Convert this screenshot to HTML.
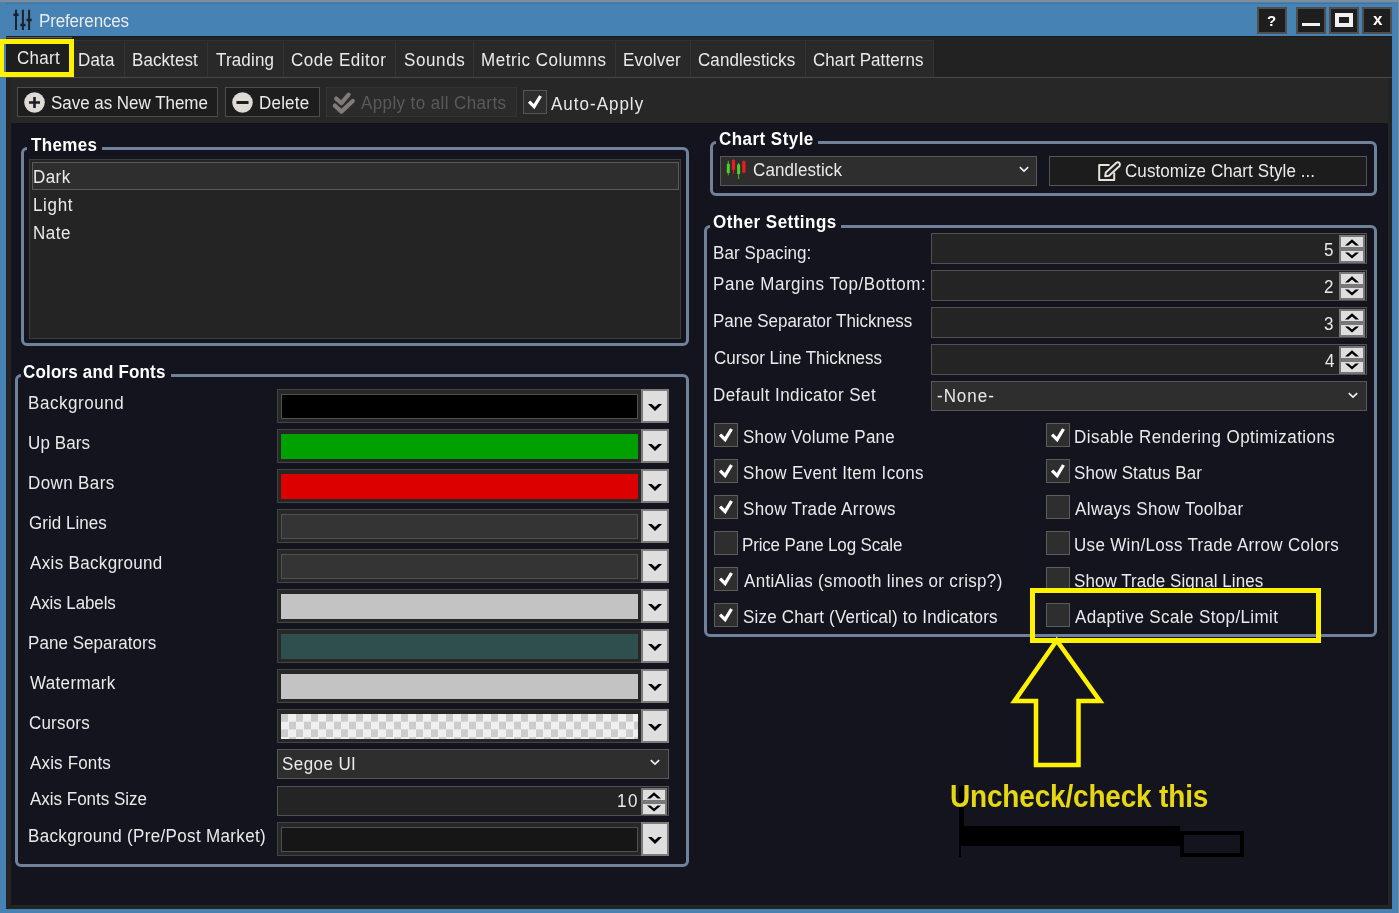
<!DOCTYPE html>
<html lang="en"><head><meta charset="utf-8"><title>Preferences</title>
<style>
html,body{margin:0;padding:0}
body{width:1399px;height:913px;overflow:hidden;background:#4682b4;position:relative;font-family:"Liberation Sans", sans-serif;color:#eaeaea}
div,span,svg{position:absolute;box-sizing:border-box}
.t{white-space:nowrap;line-height:1;transform:scaleY(1.09);will-change:transform}
</style></head><body>
<div style="left:0px;top:0px;width:1399px;height:2px;background:#7f8c9b"></div>
<div style="left:6px;top:3px;width:1386px;height:1px;background:#3f75a3"></div>
<div style="left:1398px;top:2px;width:1px;height:911px;background:#7f8c9b"></div>
<div style="left:6px;top:37px;width:1386px;height:871.6px;background:#242424"></div>
<div style="left:6px;top:36px;width:1386px;height:1.2999999999999972px;background:#1c1c1c"></div>
<div style="left:6px;top:37.3px;width:1386px;height:39.7px;background:#222"></div>
<div style="left:6px;top:36.5px;width:66px;height:1.5px;background:#5c5c5c"></div>
<div style="left:72px;top:40px;width:861.5px;height:37px;background:#292929;border:1px solid #313131;border-bottom:0"></div>
<div style="left:6px;top:76.8px;width:1386px;height:1.6000000000000085px;background:#484848"></div>
<div style="left:11px;top:78px;width:1377px;height:45px;background:#272727"></div>
<div style="left:11px;top:123px;width:1377px;height:782px;background:#14141f"></div>
<svg style="left:10px;top:6px" width="28" height="28" viewBox="0 0 28 28"><g stroke="#1d2229" stroke-width="2" fill="none" stroke-linecap="butt"><path d="M6 3.7V24M12.9 3.7V24M19.1 3.7V24"/><path stroke-width="2.6" d="M3.4 8.7h5.2M10.3 19h5.2M16.5 14h5.2"/></g></svg>
<div style="left:1257px;top:7px;width:30px;height:27px;background:#1e1e1e;border:2px solid #4f4f4f"></div>
<div style="left:1296px;top:7px;width:30px;height:27px;background:#1e1e1e;border:2px solid #4f4f4f"></div>
<div style="left:1329px;top:7px;width:30px;height:27px;background:#1e1e1e;border:2px solid #4f4f4f"></div>
<div style="left:1362px;top:7px;width:30px;height:27px;background:#1e1e1e;border:2px solid #4f4f4f"></div>
<span class="t" style="left:1267px;top:13px;font-size:15px;font-weight:700;color:#fff;transform:none">?</span>
<div style="left:1302px;top:22.5px;width:18px;height:3.5px;background:#f2f2f2"></div>
<div style="left:1335px;top:12.6px;width:18.40000000000009px;height:14.799999999999999px;border:4.5px solid #f0f0f0"></div>
<span class="t" style="left:1372.5px;top:11px;font-size:17px;font-weight:700;color:#fff;transform:none">x</span>
<div style="left:6px;top:44px;width:63px;height:28px;background:#1e1e1e"></div>
<div style="left:124px;top:41px;width:1px;height:36px;background:#343434"></div>
<div style="left:206.5px;top:41px;width:1.0px;height:36px;background:#343434"></div>
<div style="left:282.5px;top:41px;width:1.0px;height:36px;background:#343434"></div>
<div style="left:395px;top:41px;width:1px;height:36px;background:#343434"></div>
<div style="left:473px;top:41px;width:1px;height:36px;background:#343434"></div>
<div style="left:614.5px;top:41px;width:1.0px;height:36px;background:#343434"></div>
<div style="left:690px;top:41px;width:1px;height:36px;background:#343434"></div>
<div style="left:805px;top:41px;width:1px;height:36px;background:#343434"></div>
<div style="left:0px;top:39px;width:74px;height:38px;border:5px solid #fff200;border-left-width:4px"></div>
<div style="left:17px;top:87px;width:201px;height:30px;background:#1d1d1d;border:1px solid #4d4d4d"></div>
<div style="left:225px;top:87px;width:95px;height:30px;background:#1d1d1d;border:1px solid #4d4d4d"></div>
<div style="left:326px;top:87px;width:191px;height:30px;background:#2b2b2b;border:1px solid #343434"></div>
<div style="left:523px;top:90px;width:24px;height:24px;background:#2e2e2e;border:1px solid #555"></div>
<svg style="left:24.1px;top:92.3px" width="21" height="21" viewBox="0 0 21 21"><circle cx="10.5" cy="10.5" r="10.3" fill="#dedad6"/><path d="M5 10.5h11M10.5 5v11" stroke="#1d1d1d" stroke-width="2.6"/></svg>
<svg style="left:232.1px;top:92.3px" width="21" height="21" viewBox="0 0 21 21"><circle cx="10.5" cy="10.5" r="10.3" fill="#dedad6"/><path d="M4.5 10.5h12" stroke="#1d1d1d" stroke-width="3"/></svg>
<svg style="left:330px;top:90px" width="28" height="26" viewBox="330 90 28 26"><g fill="none" stroke="#7e7b78" stroke-width="4.2" stroke-linecap="round" stroke-linejoin="round"><path d="M336.2 98.6l5.2 4.6 7.2-8.6"/><path d="M334.8 105.6l6.6 6 11.4-10.6"/></g></svg>
<svg style="left:523px;top:90px" width="24" height="24" viewBox="0 0 24 24"><path d="M6.1 11.6L11.1 16.6 17.5 6" fill="none" stroke="#fff" stroke-width="3.3"/></svg>
<div style="left:21px;top:147px;width:668px;height:199px;border:3px solid #70829a;border-radius:6px"></div>
<div style="left:27px;top:146px;width:75px;height:5px;background:#14141f"></div>
<div style="left:15px;top:374.3px;width:674px;height:492.7px;border:3px solid #70829a;border-radius:6px"></div>
<div style="left:21px;top:373.3px;width:150px;height:5.0px;background:#14141f"></div>
<div style="left:710px;top:141.3px;width:667px;height:54.5px;border:3px solid #70829a;border-radius:6px"></div>
<div style="left:716px;top:140.3px;width:102px;height:5.0px;background:#14141f"></div>
<div style="left:704px;top:224.5px;width:673px;height:412.79999999999995px;border:3px solid #70829a;border-radius:6px"></div>
<div style="left:710px;top:223.5px;width:131px;height:5.0px;background:#14141f"></div>
<div style="left:29px;top:159.3px;width:652px;height:179.7px;background:#242424;border:1px solid #3c3c3c"></div>
<div style="left:32px;top:162px;width:646.5px;height:28px;background:#2e2e2e;border:1px solid #5a5a5a"></div>
<div style="left:277px;top:389px;width:392px;height:34px;background:#272727;border:1px solid #444"></div>
<div style="left:281px;top:393.5px;width:357px;height:25.0px;border:1px solid #505050;background:#000000"></div>
<div style="left:641px;top:389px;width:28px;height:34px;background:#dedede;border:2px solid #7c7c7c"></div>
<svg style="left:647px;top:402.5px" width="16" height="9" viewBox="0 0 16 9"><path d="M1 1h3.6L8 4 11.4 1H15L8 8z" fill="#000"/></svg>
<div style="left:277px;top:429px;width:392px;height:34px;background:#272727;border:1px solid #444"></div>
<div style="left:281px;top:433.5px;width:357px;height:25.0px;background:#00a000"></div>
<div style="left:641px;top:429px;width:28px;height:34px;background:#dedede;border:2px solid #7c7c7c"></div>
<svg style="left:647px;top:442.5px" width="16" height="9" viewBox="0 0 16 9"><path d="M1 1h3.6L8 4 11.4 1H15L8 8z" fill="#000"/></svg>
<div style="left:277px;top:469px;width:392px;height:34px;background:#272727;border:1px solid #444"></div>
<div style="left:281px;top:473.5px;width:357px;height:25.0px;background:#dc0000"></div>
<div style="left:641px;top:469px;width:28px;height:34px;background:#dedede;border:2px solid #7c7c7c"></div>
<svg style="left:647px;top:482.5px" width="16" height="9" viewBox="0 0 16 9"><path d="M1 1h3.6L8 4 11.4 1H15L8 8z" fill="#000"/></svg>
<div style="left:277px;top:509px;width:392px;height:34px;background:#272727;border:1px solid #444"></div>
<div style="left:281px;top:513.5px;width:357px;height:25.0px;border:1px solid #505050;background:#343434"></div>
<div style="left:641px;top:509px;width:28px;height:34px;background:#dedede;border:2px solid #7c7c7c"></div>
<svg style="left:647px;top:522.5px" width="16" height="9" viewBox="0 0 16 9"><path d="M1 1h3.6L8 4 11.4 1H15L8 8z" fill="#000"/></svg>
<div style="left:277px;top:549px;width:392px;height:34px;background:#272727;border:1px solid #444"></div>
<div style="left:281px;top:553.5px;width:357px;height:25.0px;border:1px solid #505050;background:#343434"></div>
<div style="left:641px;top:549px;width:28px;height:34px;background:#dedede;border:2px solid #7c7c7c"></div>
<svg style="left:647px;top:562.5px" width="16" height="9" viewBox="0 0 16 9"><path d="M1 1h3.6L8 4 11.4 1H15L8 8z" fill="#000"/></svg>
<div style="left:277px;top:589px;width:392px;height:34px;background:#272727;border:1px solid #444"></div>
<div style="left:281px;top:593.5px;width:357px;height:25.0px;background:#c3c3c3"></div>
<div style="left:641px;top:589px;width:28px;height:34px;background:#dedede;border:2px solid #7c7c7c"></div>
<svg style="left:647px;top:602.5px" width="16" height="9" viewBox="0 0 16 9"><path d="M1 1h3.6L8 4 11.4 1H15L8 8z" fill="#000"/></svg>
<div style="left:277px;top:629px;width:392px;height:34px;background:#272727;border:1px solid #444"></div>
<div style="left:281px;top:633.5px;width:357px;height:25.0px;background:#2f4f4f"></div>
<div style="left:641px;top:629px;width:28px;height:34px;background:#dedede;border:2px solid #7c7c7c"></div>
<svg style="left:647px;top:642.5px" width="16" height="9" viewBox="0 0 16 9"><path d="M1 1h3.6L8 4 11.4 1H15L8 8z" fill="#000"/></svg>
<div style="left:277px;top:669px;width:392px;height:34px;background:#272727;border:1px solid #444"></div>
<div style="left:281px;top:673.5px;width:357px;height:25.0px;background:#c3c3c3"></div>
<div style="left:641px;top:669px;width:28px;height:34px;background:#dedede;border:2px solid #7c7c7c"></div>
<svg style="left:647px;top:682.5px" width="16" height="9" viewBox="0 0 16 9"><path d="M1 1h3.6L8 4 11.4 1H15L8 8z" fill="#000"/></svg>
<div style="left:277px;top:709px;width:392px;height:34px;background:#272727;border:1px solid #444"></div>
<div style="left:281px;top:713.5px;width:357px;height:25.0px;background:conic-gradient(#f0f0f0 25%,#ccc 0 50%,#f0f0f0 0 75%,#ccc 0) 0 0/15px 15.4px"></div>
<div style="left:641px;top:709px;width:28px;height:34px;background:#dedede;border:2px solid #7c7c7c"></div>
<svg style="left:647px;top:722.5px" width="16" height="9" viewBox="0 0 16 9"><path d="M1 1h3.6L8 4 11.4 1H15L8 8z" fill="#000"/></svg>
<div style="left:277px;top:822px;width:392px;height:34px;background:#272727;border:1px solid #444"></div>
<div style="left:281px;top:826.5px;width:357px;height:25.0px;border:1px solid #505050;background:#161616"></div>
<div style="left:641px;top:822px;width:28px;height:34px;background:#dedede;border:2px solid #7c7c7c"></div>
<svg style="left:647px;top:835.5px" width="16" height="9" viewBox="0 0 16 9"><path d="M1 1h3.6L8 4 11.4 1H15L8 8z" fill="#000"/></svg>
<div style="left:277px;top:749.3px;width:392px;height:29.300000000000068px;background:#2e2e2e;border:1px solid #585858"></div>
<svg style="left:650px;top:759.3px" width="10" height="7" viewBox="0 0 10 7"><path d="M0.8 1.2l4.2 4 4.2-4" fill="none" stroke="#f0f0f0" stroke-width="1.6"/></svg>
<div style="left:277px;top:786px;width:392px;height:30px;background:#242424;border:1px solid #505050"></div>
<div style="left:640.8px;top:788px;width:26.5px;height:27px;background:#787878"></div>
<div style="left:642.8px;top:790px;width:22.5px;height:10px;background:#dedede"></div>
<div style="left:642.8px;top:803.6px;width:22.5px;height:10.399999999999977px;background:#dedede"></div>
<svg style="left:646.8px;top:791.6px" width="14" height="7" viewBox="0 0 14 7"><path d="M0 6.4h3.4L7 3.4 10.6 6.4H14L7 0.2z" fill="#000"/></svg>
<svg style="left:646.8px;top:804.8px" width="14" height="7" viewBox="0 0 14 7"><path d="M0 0.4h3.4L7 3.4 10.6 0.4H14L7 6.6z" fill="#000"/></svg>
<div style="left:931px;top:233px;width:436px;height:31px;background:#242424;border:1px solid #505050"></div>
<div style="left:1338.8px;top:235px;width:26.5px;height:28px;background:#787878"></div>
<div style="left:1340.8px;top:237px;width:22.5px;height:10px;background:#dedede"></div>
<div style="left:1340.8px;top:250.6px;width:22.5px;height:10.400000000000006px;background:#dedede"></div>
<svg style="left:1344.8px;top:238.6px" width="14" height="7" viewBox="0 0 14 7"><path d="M0 6.4h3.4L7 3.4 10.6 6.4H14L7 0.2z" fill="#000"/></svg>
<svg style="left:1344.8px;top:251.8px" width="14" height="7" viewBox="0 0 14 7"><path d="M0 0.4h3.4L7 3.4 10.6 0.4H14L7 6.6z" fill="#000"/></svg>
<div style="left:931px;top:270px;width:436px;height:31px;background:#242424;border:1px solid #505050"></div>
<div style="left:1338.8px;top:272px;width:26.5px;height:28px;background:#787878"></div>
<div style="left:1340.8px;top:274px;width:22.5px;height:10px;background:#dedede"></div>
<div style="left:1340.8px;top:287.6px;width:22.5px;height:10.399999999999977px;background:#dedede"></div>
<svg style="left:1344.8px;top:275.6px" width="14" height="7" viewBox="0 0 14 7"><path d="M0 6.4h3.4L7 3.4 10.6 6.4H14L7 0.2z" fill="#000"/></svg>
<svg style="left:1344.8px;top:288.8px" width="14" height="7" viewBox="0 0 14 7"><path d="M0 0.4h3.4L7 3.4 10.6 0.4H14L7 6.6z" fill="#000"/></svg>
<div style="left:931px;top:307px;width:436px;height:31px;background:#242424;border:1px solid #505050"></div>
<div style="left:1338.8px;top:309px;width:26.5px;height:28px;background:#787878"></div>
<div style="left:1340.8px;top:311px;width:22.5px;height:10px;background:#dedede"></div>
<div style="left:1340.8px;top:324.6px;width:22.5px;height:10.399999999999977px;background:#dedede"></div>
<svg style="left:1344.8px;top:312.6px" width="14" height="7" viewBox="0 0 14 7"><path d="M0 6.4h3.4L7 3.4 10.6 6.4H14L7 0.2z" fill="#000"/></svg>
<svg style="left:1344.8px;top:325.8px" width="14" height="7" viewBox="0 0 14 7"><path d="M0 0.4h3.4L7 3.4 10.6 0.4H14L7 6.6z" fill="#000"/></svg>
<div style="left:931px;top:344px;width:436px;height:31px;background:#242424;border:1px solid #505050"></div>
<div style="left:1338.8px;top:346px;width:26.5px;height:28px;background:#787878"></div>
<div style="left:1340.8px;top:348px;width:22.5px;height:10px;background:#dedede"></div>
<div style="left:1340.8px;top:361.6px;width:22.5px;height:10.399999999999977px;background:#dedede"></div>
<svg style="left:1344.8px;top:349.6px" width="14" height="7" viewBox="0 0 14 7"><path d="M0 6.4h3.4L7 3.4 10.6 6.4H14L7 0.2z" fill="#000"/></svg>
<svg style="left:1344.8px;top:362.8px" width="14" height="7" viewBox="0 0 14 7"><path d="M0 0.4h3.4L7 3.4 10.6 0.4H14L7 6.6z" fill="#000"/></svg>
<div style="left:720px;top:156px;width:317px;height:30px;background:#2e2e2e;border:1px solid #585858"></div>
<svg style="left:1018.7px;top:166.3px" width="10" height="7" viewBox="0 0 10 7"><path d="M0.8 1.2l4.2 4 4.2-4" fill="none" stroke="#f0f0f0" stroke-width="1.6"/></svg>
<svg style="left:725px;top:157px" width="23" height="24" viewBox="725 157 23 24"><g fill="none"><path stroke="#2db52d" stroke-width="1.1" d="M728.3 160.8V175.2M738.6 162.9V179"/><path stroke="#e8151b" stroke-width="1.1" d="M733.5 158.9V173.7M743.9 160.5V173.6"/><path stroke="#4fcf2f" stroke-width="3" d="M728.3 163.8V173M738.6 164.4V174.1"/><path stroke="#f01a20" stroke-width="3.2" d="M733.5 159.9V169.8M743.9 161.2V172.6"/></g></svg>
<div style="left:1049px;top:156px;width:318px;height:30px;background:#1c1c1c;border:1px solid #555"></div>
<svg style="left:1096px;top:160px" width="26" height="24" viewBox="1096 160 26 24"><g fill="none" stroke="#e6e2dd" stroke-width="2" stroke-linejoin="round"><path d="M1109.5 165H1099.2v15h15v-7.5"/><path d="M1105.2 176.2l0.6-3.6 10.6-9.9a2.3 2.3 0 0 1 3.2 3.2l-10.6 9.9z"/></g></svg>
<div style="left:931px;top:381.3px;width:436px;height:29.69999999999999px;background:#2e2e2e;border:1px solid #585858"></div>
<svg style="left:1348px;top:391.5px" width="10" height="7" viewBox="0 0 10 7"><path d="M0.8 1.2l4.2 4 4.2-4" fill="none" stroke="#f0f0f0" stroke-width="1.6"/></svg>
<div style="left:714px;top:423px;width:24px;height:24px;background:#2e2e2e;border:1px solid #5c5c5c"></div>
<svg style="left:714px;top:423px" width="24" height="24" viewBox="0 0 24 24"><path d="M6.1 11.6L11.1 16.6 17.5 6" fill="none" stroke="#fff" stroke-width="3.3"/></svg>
<div style="left:714px;top:459px;width:24px;height:24px;background:#2e2e2e;border:1px solid #5c5c5c"></div>
<svg style="left:714px;top:459px" width="24" height="24" viewBox="0 0 24 24"><path d="M6.1 11.6L11.1 16.6 17.5 6" fill="none" stroke="#fff" stroke-width="3.3"/></svg>
<div style="left:714px;top:495px;width:24px;height:24px;background:#2e2e2e;border:1px solid #5c5c5c"></div>
<svg style="left:714px;top:495px" width="24" height="24" viewBox="0 0 24 24"><path d="M6.1 11.6L11.1 16.6 17.5 6" fill="none" stroke="#fff" stroke-width="3.3"/></svg>
<div style="left:714px;top:531px;width:24px;height:24px;background:#2e2e2e;border:1px solid #5c5c5c"></div>
<div style="left:714px;top:567px;width:24px;height:24px;background:#2e2e2e;border:1px solid #5c5c5c"></div>
<svg style="left:714px;top:567px" width="24" height="24" viewBox="0 0 24 24"><path d="M6.1 11.6L11.1 16.6 17.5 6" fill="none" stroke="#fff" stroke-width="3.3"/></svg>
<div style="left:714px;top:603px;width:24px;height:24px;background:#2e2e2e;border:1px solid #5c5c5c"></div>
<svg style="left:714px;top:603px" width="24" height="24" viewBox="0 0 24 24"><path d="M6.1 11.6L11.1 16.6 17.5 6" fill="none" stroke="#fff" stroke-width="3.3"/></svg>
<div style="left:1046px;top:423px;width:24px;height:24px;background:#2e2e2e;border:1px solid #5c5c5c"></div>
<svg style="left:1046px;top:423px" width="24" height="24" viewBox="0 0 24 24"><path d="M6.1 11.6L11.1 16.6 17.5 6" fill="none" stroke="#fff" stroke-width="3.3"/></svg>
<div style="left:1046px;top:459px;width:24px;height:24px;background:#2e2e2e;border:1px solid #5c5c5c"></div>
<svg style="left:1046px;top:459px" width="24" height="24" viewBox="0 0 24 24"><path d="M6.1 11.6L11.1 16.6 17.5 6" fill="none" stroke="#fff" stroke-width="3.3"/></svg>
<div style="left:1046px;top:495px;width:24px;height:24px;background:#2e2e2e;border:1px solid #5c5c5c"></div>
<div style="left:1046px;top:531px;width:24px;height:24px;background:#2e2e2e;border:1px solid #5c5c5c"></div>
<div style="left:1046px;top:567px;width:24px;height:24px;background:#2e2e2e;border:1px solid #5c5c5c"></div>
<div style="left:1046px;top:603px;width:24px;height:24px;background:#2e2e2e;border:1px solid #5c5c5c"></div>
<div style="left:959px;top:786px;width:5px;height:42px;background:#000"></div>
<div style="left:959px;top:826px;width:2px;height:31px;background:#000"></div>
<div style="left:959px;top:826px;width:221px;height:19.700000000000045px;background:#000"></div>
<div style="left:1179.5px;top:830.7px;width:64.5px;height:26.299999999999955px;border:4.5px solid #000"></div>
<span class="t" id="t0" style="left:38.71px;top:12.61px;font-size:17px;font-weight:400;color:#eaeaea;letter-spacing:-0.156px;transform-origin:0 14.39px">Preferences</span>
<span class="t" id="t1" style="left:17.44px;top:49.61px;font-size:17px;font-weight:400;color:#eaeaea;letter-spacing:0.277px;transform-origin:0 14.39px">Chart</span>
<span class="t" id="t2" style="left:78.11px;top:51.61px;font-size:17px;font-weight:400;color:#eaeaea;letter-spacing:0.158px;transform-origin:0 14.39px">Data</span>
<span class="t" id="t3" style="left:132.41px;top:51.61px;font-size:17px;font-weight:400;color:#eaeaea;letter-spacing:0.074px;transform-origin:0 14.39px">Backtest</span>
<span class="t" id="t4" style="left:216.12px;top:51.61px;font-size:17px;font-weight:400;color:#eaeaea;letter-spacing:0.160px;transform-origin:0 14.39px">Trading</span>
<span class="t" id="t5" style="left:291.14px;top:51.61px;font-size:17px;font-weight:400;color:#eaeaea;letter-spacing:0.516px;transform-origin:0 14.39px">Code Editor</span>
<span class="t" id="t6" style="left:403.53px;top:51.61px;font-size:17px;font-weight:400;color:#eaeaea;letter-spacing:0.623px;transform-origin:0 14.39px">Sounds</span>
<span class="t" id="t7" style="left:481.11px;top:51.61px;font-size:17px;font-weight:400;color:#eaeaea;letter-spacing:0.532px;transform-origin:0 14.39px">Metric Columns</span>
<span class="t" id="t8" style="left:623.11px;top:51.61px;font-size:17px;font-weight:400;color:#eaeaea;letter-spacing:0.165px;transform-origin:0 14.39px">Evolver</span>
<span class="t" id="t9" style="left:698.44px;top:51.61px;font-size:17px;font-weight:400;color:#eaeaea;letter-spacing:0.073px;transform-origin:0 14.39px">Candlesticks</span>
<span class="t" id="t10" style="left:813.44px;top:51.61px;font-size:17px;font-weight:400;color:#eaeaea;letter-spacing:0.067px;transform-origin:0 14.39px">Chart Patterns</span>
<span class="t" id="t11" style="left:51.13px;top:94.61px;font-size:17px;font-weight:400;color:#eaeaea;letter-spacing:-0.035px;transform-origin:0 14.39px">Save as New Theme</span>
<span class="t" id="t12" style="left:259.01px;top:94.61px;font-size:17px;font-weight:400;color:#eaeaea;letter-spacing:0.202px;transform-origin:0 14.39px">Delete</span>
<span class="t" id="t13" style="left:360.67px;top:94.61px;font-size:17px;font-weight:400;color:#5a5a5a;letter-spacing:0.394px;transform-origin:0 14.39px">Apply to all Charts</span>
<span class="t" id="t14" style="left:551.37px;top:95.61px;font-size:17px;font-weight:400;color:#eaeaea;letter-spacing:0.999px;transform-origin:0 14.39px">Auto-Apply</span>
<span class="t" id="t15" style="left:30.81px;top:136.61px;font-size:17px;font-weight:700;color:#ffffff;letter-spacing:0.328px;transform-origin:0 14.39px">Themes</span>
<span class="t" id="t16" style="left:23.30px;top:363.61px;font-size:17px;font-weight:700;color:#ffffff;letter-spacing:0.174px;transform-origin:0 14.39px">Colors and Fonts</span>
<span class="t" id="t17" style="left:718.80px;top:130.61px;font-size:17px;font-weight:700;color:#ffffff;letter-spacing:0.453px;transform-origin:0 14.39px">Chart Style</span>
<span class="t" id="t18" style="left:713.00px;top:213.61px;font-size:17px;font-weight:700;color:#ffffff;letter-spacing:0.467px;transform-origin:0 14.39px">Other Settings</span>
<span class="t" id="t19" style="left:33.01px;top:168.61px;font-size:17px;font-weight:400;color:#eaeaea;letter-spacing:0.421px;transform-origin:0 14.39px">Dark</span>
<span class="t" id="t20" style="left:32.71px;top:196.61px;font-size:17px;font-weight:400;color:#eaeaea;letter-spacing:0.661px;transform-origin:0 14.39px">Light</span>
<span class="t" id="t21" style="left:32.71px;top:224.61px;font-size:17px;font-weight:400;color:#eaeaea;letter-spacing:0.509px;transform-origin:0 14.39px">Nate</span>
<span class="t" id="t22" style="left:28.41px;top:394.61px;font-size:17px;font-weight:400;color:#eaeaea;letter-spacing:0.551px;transform-origin:0 14.39px">Background</span>
<span class="t" id="t23" style="left:28.49px;top:434.61px;font-size:17px;font-weight:400;color:#eaeaea;letter-spacing:0.117px;transform-origin:0 14.39px">Up Bars</span>
<span class="t" id="t24" style="left:28.41px;top:474.61px;font-size:17px;font-weight:400;color:#eaeaea;letter-spacing:0.384px;transform-origin:0 14.39px">Down Bars</span>
<span class="t" id="t25" style="left:28.95px;top:514.61px;font-size:17px;font-weight:400;color:#eaeaea;letter-spacing:0.021px;transform-origin:0 14.39px">Grid Lines</span>
<span class="t" id="t26" style="left:29.77px;top:554.61px;font-size:17px;font-weight:400;color:#eaeaea;letter-spacing:0.339px;transform-origin:0 14.39px">Axis Background</span>
<span class="t" id="t27" style="left:29.77px;top:594.61px;font-size:17px;font-weight:400;color:#eaeaea;letter-spacing:-0.109px;transform-origin:0 14.39px">Axis Labels</span>
<span class="t" id="t28" style="left:28.41px;top:634.61px;font-size:17px;font-weight:400;color:#eaeaea;letter-spacing:0.044px;transform-origin:0 14.39px">Pane Separators</span>
<span class="t" id="t29" style="left:29.73px;top:674.61px;font-size:17px;font-weight:400;color:#eaeaea;letter-spacing:0.344px;transform-origin:0 14.39px">Watermark</span>
<span class="t" id="t30" style="left:28.94px;top:714.61px;font-size:17px;font-weight:400;color:#eaeaea;letter-spacing:0.194px;transform-origin:0 14.39px">Cursors</span>
<span class="t" id="t31" style="left:29.77px;top:754.61px;font-size:17px;font-weight:400;color:#eaeaea;letter-spacing:0.165px;transform-origin:0 14.39px">Axis Fonts</span>
<span class="t" id="t32" style="left:29.77px;top:790.61px;font-size:17px;font-weight:400;color:#eaeaea;letter-spacing:-0.012px;transform-origin:0 14.39px">Axis Fonts Size</span>
<span class="t" id="t33" style="left:28.41px;top:827.61px;font-size:17px;font-weight:400;color:#eaeaea;letter-spacing:0.333px;transform-origin:0 14.39px">Background (Pre/Post Market)</span>
<span class="t" id="t34" style="left:282.23px;top:755.61px;font-size:17px;font-weight:400;color:#eaeaea;letter-spacing:0.421px;transform-origin:0 14.39px">Segoe UI</span>
<span class="t" id="t35" style="left:616.71px;top:792.61px;font-size:17px;font-weight:400;color:#eaeaea;letter-spacing:1.537px;transform-origin:0 14.39px">10</span>
<span class="t" id="t36" style="left:713.41px;top:244.61px;font-size:17px;font-weight:400;color:#eaeaea;letter-spacing:0.091px;transform-origin:0 14.39px">Bar Spacing:</span>
<span class="t" id="t37" style="left:713.41px;top:275.61px;font-size:17px;font-weight:400;color:#eaeaea;letter-spacing:0.549px;transform-origin:0 14.39px">Pane Margins Top/Bottom:</span>
<span class="t" id="t38" style="left:713.41px;top:312.61px;font-size:17px;font-weight:400;color:#eaeaea;letter-spacing:-0.031px;transform-origin:0 14.39px">Pane Separator Thickness</span>
<span class="t" id="t39" style="left:713.94px;top:349.61px;font-size:17px;font-weight:400;color:#eaeaea;letter-spacing:-0.043px;transform-origin:0 14.39px">Cursor Line Thickness</span>
<span class="t" id="t40" style="left:713.41px;top:386.61px;font-size:17px;font-weight:400;color:#eaeaea;letter-spacing:0.429px;transform-origin:0 14.39px">Default Indicator Set</span>
<span class="t" id="t41" style="left:752.84px;top:161.61px;font-size:17px;font-weight:400;color:#eaeaea;letter-spacing:0.106px;transform-origin:0 14.39px">Candlestick</span>
<span class="t" id="t42" style="left:1124.94px;top:162.61px;font-size:17px;font-weight:400;color:#eaeaea;letter-spacing:0.087px;transform-origin:0 14.39px">Customize Chart Style ...</span>
<span class="t" id="t43" style="left:936.94px;top:387.61px;font-size:17px;font-weight:400;color:#eaeaea;letter-spacing:0.968px;transform-origin:0 14.39px">-None-</span>
<span class="t" id="t44" style="left:1324.32px;top:241.61px;font-size:17px;font-weight:400;color:#eaeaea;letter-spacing:0.000px;transform-origin:0 14.39px">5</span>
<span class="t" id="t45" style="left:1324.15px;top:278.61px;font-size:17px;font-weight:400;color:#eaeaea;letter-spacing:0.000px;transform-origin:0 14.39px">2</span>
<span class="t" id="t46" style="left:1324.35px;top:315.61px;font-size:17px;font-weight:400;color:#eaeaea;letter-spacing:0.000px;transform-origin:0 14.39px">3</span>
<span class="t" id="t47" style="left:1324.61px;top:352.61px;font-size:17px;font-weight:400;color:#eaeaea;letter-spacing:0.000px;transform-origin:0 14.39px">4</span>
<span class="t" id="t48" style="left:743.03px;top:428.61px;font-size:17px;font-weight:400;color:#eaeaea;letter-spacing:0.222px;transform-origin:0 14.39px">Show Volume Pane</span>
<span class="t" id="t49" style="left:743.03px;top:464.61px;font-size:17px;font-weight:400;color:#eaeaea;letter-spacing:0.336px;transform-origin:0 14.39px">Show Event Item Icons</span>
<span class="t" id="t50" style="left:743.03px;top:500.61px;font-size:17px;font-weight:400;color:#eaeaea;letter-spacing:0.324px;transform-origin:0 14.39px">Show Trade Arrows</span>
<span class="t" id="t51" style="left:742.41px;top:536.61px;font-size:17px;font-weight:400;color:#eaeaea;letter-spacing:-0.166px;transform-origin:0 14.39px">Price Pane Log Scale</span>
<span class="t" id="t52" style="left:743.77px;top:572.61px;font-size:17px;font-weight:400;color:#eaeaea;letter-spacing:0.326px;transform-origin:0 14.39px">AntiAlias (smooth lines or crisp?)</span>
<span class="t" id="t53" style="left:743.03px;top:608.61px;font-size:17px;font-weight:400;color:#eaeaea;letter-spacing:0.179px;transform-origin:0 14.39px">Size Chart (Vertical) to Indicators</span>
<span class="t" id="t54" style="left:1073.81px;top:428.61px;font-size:17px;font-weight:400;color:#eaeaea;letter-spacing:0.442px;transform-origin:0 14.39px">Disable Rendering Optimizations</span>
<span class="t" id="t55" style="left:1074.43px;top:464.61px;font-size:17px;font-weight:400;color:#eaeaea;letter-spacing:0.088px;transform-origin:0 14.39px">Show Status Bar</span>
<span class="t" id="t56" style="left:1075.17px;top:500.61px;font-size:17px;font-weight:400;color:#eaeaea;letter-spacing:0.380px;transform-origin:0 14.39px">Always Show Toolbar</span>
<span class="t" id="t57" style="left:1073.89px;top:536.61px;font-size:17px;font-weight:400;color:#eaeaea;letter-spacing:0.321px;transform-origin:0 14.39px">Use Win/Loss Trade Arrow Colors</span>
<span class="t" id="t58" style="left:1074.43px;top:572.61px;font-size:17px;font-weight:400;color:#eaeaea;letter-spacing:0.051px;transform-origin:0 14.39px">Show Trade Signal Lines</span>
<span class="t" id="t59" style="left:1075.17px;top:608.61px;font-size:17px;font-weight:400;color:#eaeaea;letter-spacing:0.385px;transform-origin:0 14.39px">Adaptive Scale Stop/Limit</span>
<span class="t" id="t60" style="left:949.82px;top:783.90px;font-size:28px;font-weight:700;color:#e6d712;letter-spacing:-0.184px;transform-origin:0 23.70px">Uncheck/check this</span>
<div style="left:1030px;top:588px;width:290.5px;height:55px;border:5px solid #fff200"></div>
<svg style="left:1000px;top:630px" width="120" height="145" viewBox="1000 630 120 145"><path d="M1056.7 640.5 L1014.5 701 H1036 V765 H1078.5 V701 H1100 Z" fill="none" stroke="#fff200" stroke-width="4.5" stroke-linejoin="miter"/></svg>
</body></html>
